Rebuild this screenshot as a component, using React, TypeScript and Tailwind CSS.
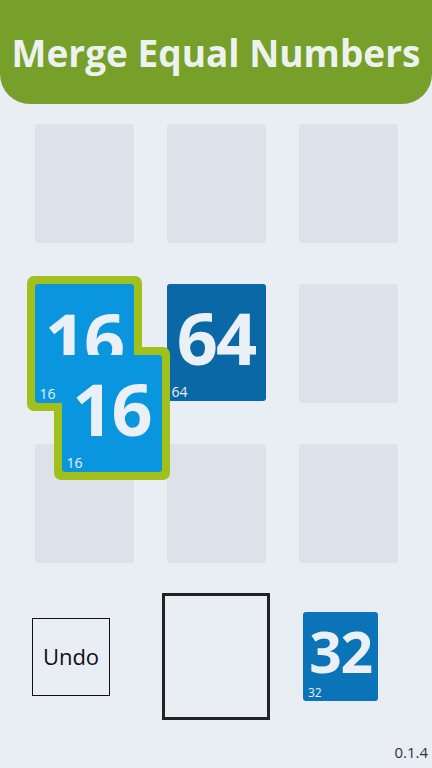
const font = { fontFamily: '"Open Sans", "Liberation Sans", sans-serif' };

function Tile({ value, color, big = 'text-[72px] pb-[10px]', small = 'text-[14px]', className = '' }: { value: number; color: string; big?: string; small?: string; className?: string }) {
  return (
    <div className={`relative flex items-center justify-center rounded-[3px] ${color} ${className}`}>
      <span className={`${big} font-bold leading-[0.72] tracking-tight text-[#eaf0f5]`}>{value}</span>
      <span className={`absolute bottom-[2px] left-[5px] ${small} leading-none text-[#eaf0f5]`}>{value}</span>
    </div>
  );
}

function Cell() {
  return <div className="h-[119px] w-[99px] rounded-[3px] bg-[#dde2ea]" />;
}

export default function App() {
  return (
    <div className="flex min-h-[768px] w-[432px] flex-col bg-[#e9eef5]" style={font}>
      {/* Header */}
      <div className="flex h-[104px] items-start justify-center rounded-b-[30px] bg-[#76a02a] pt-[30px]">
        <h1 className="text-[37px] font-bold leading-tight text-[#eef2ee]">Merge Equal Numbers</h1>
      </div>

      {/* Board */}
      <div className="relative mx-auto mt-[20px] grid grid-cols-[99px_99px_99px] gap-x-[33px] gap-y-[41px]">
        <Cell />
        <Cell />
        <Cell />

        <div className="relative h-[119px] w-[99px]">
          <div className="absolute -inset-[8px] z-10 rounded-[7px] bg-[#a2c01c]" />
          <Tile value={16} color="bg-[#0a96df]" className="z-20 h-[119px] w-[99px]" />
        </div>
        <Tile value={64} color="bg-[#0a68a7]" className="h-[117px] w-[99px]" />
        <Cell />

        <Cell />
        <Cell />
        <Cell />

        {/* dragged tile */}
        <div className="absolute left-[19px] top-[223px] z-10 h-[133px] w-[116px] rounded-[7px] bg-[#a2c01c]" />
        <Tile value={16} color="bg-[#0a96df]" className="!absolute left-[27px] top-[231px] z-20 h-[117px] w-[100px]" />
      </div>

      {/* Bottom controls */}
      <div className="mt-[30px] flex items-center pl-[32px]">
        <button className="flex h-[78px] w-[78px] items-center justify-center border-[1.5px] border-[#111] text-[22px] text-[#111]">
          Undo
        </button>
        <div className="ml-[52px] h-[127px] w-[108px] border-[3px] border-[#222]" />
        <Tile value={32} color="bg-[#0b74b8]" big="text-[57px] pb-[10px]" small="text-[12px]" className="ml-[33px] h-[89px] w-[75px]" />
      </div>

      <div className="mt-auto pb-[5px] pr-[4px] text-right text-[15px] text-[#333]">0.1.4</div>
    </div>
  );
}
